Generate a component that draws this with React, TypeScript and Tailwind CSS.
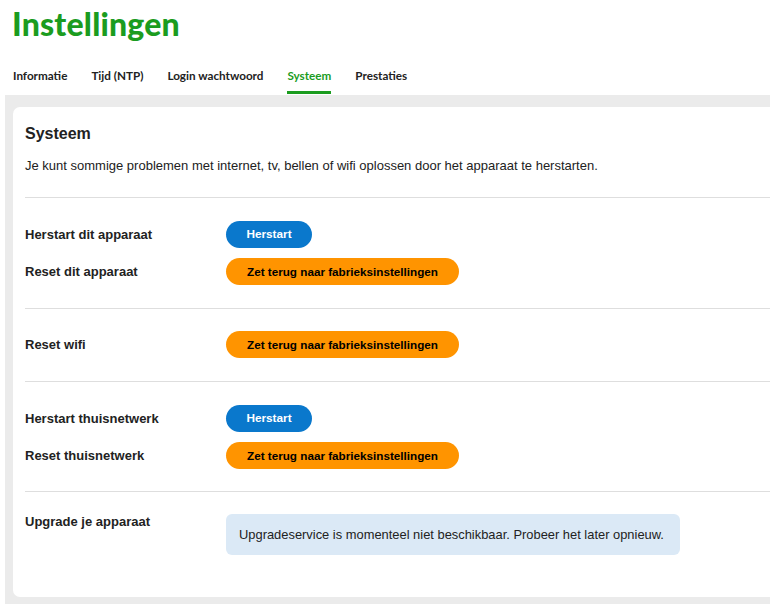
const tabs = ["Informatie", "Tijd (NTP)", "Login wachtwoord", "Systeem", "Prestaties"];

function Pill({ kind, children }: { kind: "blue" | "orange"; children: string }) {
  return (
    <button
      className={
        kind === "blue"
          ? "h-[27px] w-[86px] rounded-full bg-[#0a78cc] text-[11.8px] font-bold text-white"
          : "h-[27px] w-[233px] rounded-full bg-[#ff9400] text-[11.7px] font-bold text-black"
      }
    >
      {children}
    </button>
  );
}

function Row({ label, children }: { label: string; children: React.ReactNode }) {
  return (
    <div className="flex items-center">
      <div className="w-[201px] text-[13px] font-bold text-[#222]">{label}</div>
      {children}
    </div>
  );
}

function Section({ pad, children }: { pad: string; children: React.ReactNode }) {
  return (
    <div className={"flex flex-col gap-[10px] border-t border-[#dedede] " + pad}>{children}</div>
  );
}

export default function App() {
  return (
    <div className="h-[609px] w-[779px] overflow-hidden bg-white font-['Liberation_Sans',Arial,sans-serif]">
      <h1 className="ml-[12px] pt-[5px] font-['Lato',sans-serif] text-[32px] font-black leading-[38px] tracking-[0.2px] text-[#1b9c1f]">
        Instellingen
      </h1>
      <nav className="mb-[1px] ml-[13px] mt-[18px] flex gap-[24px] font-['Lato',sans-serif] text-[11.7px] font-bold">
        {tabs.map((t) => (
          <div
            key={t}
            className={
              t === "Systeem"
                ? "flex h-[33px] items-start border-b-[3px] border-[#1b9c1f] pt-[6px] text-[#1b9c1f]"
                : "flex h-[33px] items-start pt-[6px] text-[#222]"
            }
          >
            {t}
          </div>
        ))}
      </nav>
      <div className="ml-[5px] w-[765px] overflow-hidden bg-[#ebebeb] pb-[7px] pl-[8px] pt-[12px]">
        <div className="w-[800px] rounded-l-[7px] bg-white px-[12px] pt-[18px] text-[#222]">
          <h2 className="text-[16px] font-bold leading-[18px]">Systeem</h2>
          <p className="mb-[23px] mt-[15px] text-[13px] leading-[16px]">
            Je kunt sommige problemen met internet, tv, bellen of wifi oplossen door het apparaat te herstarten.
          </p>
          <Section pad="py-[23px]">
            <Row label="Herstart dit apparaat">
              <Pill kind="blue">Herstart</Pill>
            </Row>
            <Row label="Reset dit apparaat">
              <Pill kind="orange">Zet terug naar fabrieksinstellingen</Pill>
            </Row>
          </Section>
          <Section pad="pt-[22px] pb-[23px]">
            <Row label="Reset wifi">
              <Pill kind="orange">Zet terug naar fabrieksinstellingen</Pill>
            </Row>
          </Section>
          <Section pad="pt-[23px] pb-[22px]">
            <Row label="Herstart thuisnetwerk">
              <Pill kind="blue">Herstart</Pill>
            </Row>
            <Row label="Reset thuisnetwerk">
              <Pill kind="orange">Zet terug naar fabrieksinstellingen</Pill>
            </Row>
          </Section>
          <div className="flex h-[106px] items-start border-t border-[#dedede] pt-[22px]">
            <div className="w-[201px] text-[13px] font-bold leading-[16px]">Upgrade je apparaat</div>
            <div className="flex h-[41px] w-[454px] items-center whitespace-nowrap rounded-[6px] bg-[#dbe9f6] px-[13px] text-[12.9px]">
              Upgradeservice is momenteel niet beschikbaar. Probeer het later opnieuw.
            </div>
          </div>
        </div>
      </div>
    </div>
  );
}
